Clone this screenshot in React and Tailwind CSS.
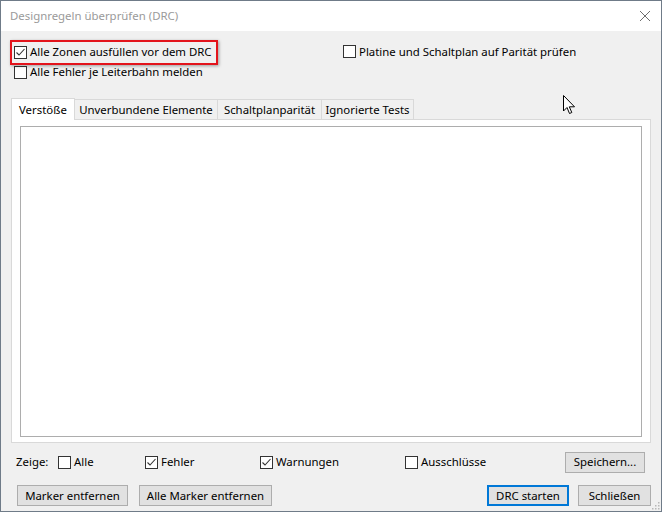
import React from 'react';

const font = { fontFamily: '"Noto Sans", "Open Sans", sans-serif' };

const Check = ({ checked }) => (
  <span className="w-[13px] h-[13px] shrink-0 border border-[#333333] bg-white flex items-center justify-center">
    {checked && (
      <svg width="11" height="11" viewBox="0 0 11 11">
        <path d="M1.5 5.5 L4 8 L9.5 2" fill="none" stroke="#333333" strokeWidth="1.1" />
      </svg>
    )}
  </span>
);

const CheckRow = ({ checked, label, className = '' }) => (
  <div className={`flex items-center gap-[3px] ${className}`}>
    <Check checked={checked} />
    <span className="leading-none">{label}</span>
  </div>
);

const Btn = ({ children, w, primary }) => (
  <button
    className={`${w} h-[21px] bg-[#e1e1e1] text-[11.4px] leading-none text-black ${
      primary ? 'border-2 border-[#0078d7]' : 'border border-[#adadad]'
    }`}
  >
    {children}
  </button>
);

export default function App() {
  const tabs = ['Unverbundene Elemente', 'Schaltplanparität', 'Ignorierte Tests'];
  const tabW = ['w-[143px]', 'w-[104px]', 'w-[92px]'];

  return (
    <div
      className="relative w-[662px] h-[512px] border border-[#6f7b88] bg-[#f0f0f0] text-[11.4px] text-black flex flex-col overflow-hidden"
      style={font}
    >
      {/* title bar */}
      <div className="h-[30px] bg-white flex items-center justify-between pl-[9px] pr-[9px] shrink-0">
        <span className="text-[#9a9a9a] text-[11.4px]">Designregeln überprüfen (DRC)</span>
        <svg width="12" height="12" viewBox="0 0 12 12" className="mr-[1px]">
          <path d="M1 1 L11 11 M11 1 L1 11" stroke="#6e6e6e" strokeWidth="1" />
        </svg>
      </div>

      {/* options */}
      <div className="relative mt-[11px] pl-[13px] flex">
        <div className="flex flex-col w-[329px]">
          <CheckRow checked label="Alle Zonen ausfüllen vor dem DRC" className="h-[20px]" />
          <CheckRow label="Alle Fehler je Leiterbahn melden" className="h-[20px]" />
        </div>
        <CheckRow label="Platine und Schaltplan auf Parität prüfen" className="h-[19px] gap-[2px]" />
        <div className="absolute left-[9px] top-[-2px] w-[208px] h-[25px] border-2 border-[#e3141c] shadow-[1px_1px_3px_rgba(0,0,0,0.35)]" />
      </div>

      {/* tabs */}
      <div className="mt-[16px] pl-[10px] flex items-end">
        <div className="relative z-10 w-[64px] h-[22px] -mb-px bg-white border border-b-0 border-[#d9d9d9] flex items-center pl-[7px]">
          Verstöße
        </div>
        {tabs.map((t, i) => (
          <div
            key={t}
            className={`${tabW[i]} h-[20px] border-t border-r border-[#d9d9d9] bg-[#f0f0f0] flex items-center justify-center`}
          >
            {t}
          </div>
        ))}
      </div>
      <div className="ml-[10px] w-[640px] h-[324px] bg-white border border-[#d9d9d9] pt-[6px] pb-[5px] px-[8px] shrink-0">
        <div className="w-full h-full bg-white border border-[#adadad]" />
      </div>

      {/* filter row */}
      <div className="mt-[8px] h-[22px] flex items-center pl-[15px]">
        <span className="w-[42px]">Zeige:</span>
        <CheckRow label="Alle" className="w-[87px]" />
        <CheckRow checked label="Fehler" className="w-[115px]" />
        <CheckRow checked label="Warnungen" className="w-[145px]" />
        <CheckRow label="Ausschlüsse" className="w-[160px]" />
        <Btn w="w-[80px]">Speichern...</Btn>
      </div>

      {/* buttons */}
      <div className="mt-[12px] flex items-center pl-[16px]">
        <Btn w="w-[111px]">Marker entfernen</Btn>
        <div className="w-[11px]" />
        <Btn w="w-[133px]">Alle Marker entfernen</Btn>
        <div className="w-[215px]" />
        <Btn w="w-[82px]" primary>DRC starten</Btn>
        <div className="w-[9px]" />
        <Btn w="w-[73px]">Schließen</Btn>
      </div>

      {/* resize grip */}
      <svg className="absolute right-[1px] bottom-[1px]" width="10" height="10" viewBox="0 0 10 10">
        {[[8, 2], [8, 5], [8, 8], [5, 5], [5, 8], [2, 8]].map(([x, y]) => (
          <rect key={`${x}-${y}`} x={x} y={y} width="1.5" height="1.5" fill="#b8b8b8" />
        ))}
      </svg>

      {/* mouse cursor */}
      <svg className="absolute left-[562px] top-[94px]" width="13" height="20" viewBox="0 0 13 20">
        <path
          d="M0.5 0.5 L0.5 16 L4 12.5 L6.5 18.5 L8.8 17.5 L6.3 11.8 L11.5 11.8 Z"
          fill="white"
          stroke="black"
          strokeWidth="1"
          strokeLinejoin="miter"
        />
      </svg>
    </div>
  );
}
